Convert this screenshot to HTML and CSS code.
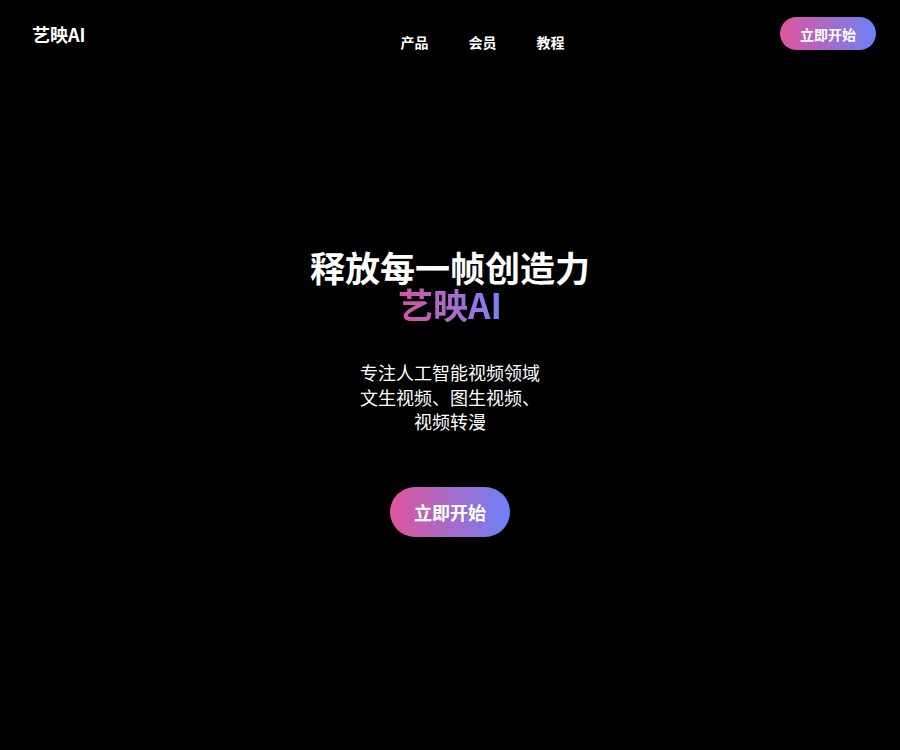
FILE: index.html
```html
<!DOCTYPE html>
<html lang="zh">
<head>
<meta charset="utf-8">
<title>艺映AI</title>
<link rel="stylesheet" href="styles.css">
</head>
<body>
<header class="header">
  <div class="logo">艺映AI</div>
  <nav class="nav">
    <a class="nav-item">产品</a>
    <a class="nav-item">会员</a>
    <a class="nav-item">教程</a>
  </nav>
  <a class="btn btn-small">立即开始</a>
</header>
<main class="hero">
  <h1 class="title">
    <span class="title-main">释放每一帧创造力</span>
    <span class="title-brand">艺映AI</span>
  </h1>
  <p class="subtitle">专注人工智能视频领域文生视频、图生视频、视频转漫</p>
  <a class="btn btn-large">立即开始</a>
</main>
</body>
</html>
```
FILE: styles.css
```css
* { box-sizing: border-box; }
html, body {
  margin: 0;
  padding: 0;
  background: #000;
  color: #fff;
  font-family: "Noto Sans CJK SC", "Noto Sans", sans-serif;
  height: 100%;
}
.header {
  display: flex;
  align-items: flex-start;
  padding: 17px 24px 0 32px;
}
.logo {
  font-size: 18px;
  font-weight: 700;
  line-height: 36px;
  margin-top: -1px;
}
.nav {
  display: flex;
  gap: 40px;
  margin-left: 315px;
  margin-top: 15px;
}
.nav-item {
  font-size: 14px;
  font-weight: 700;
  line-height: 20px;
  color: #fff;
}
.btn {
  display: inline-flex;
  align-items: center;
  justify-content: center;
  color: #fff;
  font-weight: 700;
  border-radius: 999px;
  background: linear-gradient(to right, #e0559b, #6d80f8);
}
.btn-small {
  margin-left: auto;
  width: 96px;
  height: 33px;
  font-size: 14px;
}
.hero {
  display: flex;
  flex-direction: column;
  align-items: center;
  text-align: center;
  padding-top: 196px;
}
.title {
  margin: 0;
  display: flex;
  flex-direction: column;
  font-size: 35px;
  line-height: 37px;
  font-weight: 700;
}
.title-brand {
  background: linear-gradient(to right, #d9539f, #7a82f5);
  -webkit-background-clip: text;
  background-clip: text;
  color: transparent;
  align-self: center;
}
.subtitle {
  margin: 38px 0 0;
  width: 184px;
  font-size: 18px;
  line-height: 24.5px;
}
.btn-large {
  margin-top: 53px;
  width: 120px;
  height: 50px;
  font-size: 18px;
}
```
